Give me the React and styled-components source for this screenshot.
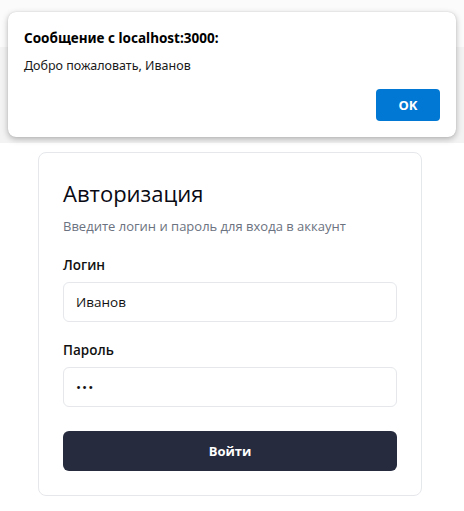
import React from 'react'
import styled, { createGlobalStyle } from 'styled-components'

const GlobalStyle = createGlobalStyle`
  * { box-sizing: border-box; }
  body {
    margin: 0;
    background: #fff;
    font-family: "Open Sans", "Noto Sans", sans-serif;
  }
`

const Backdrop = styled.div`
  height: 143px;
  padding: 12px 8px 0 8px;
  background: linear-gradient(#fbfbfb 0 47px, #f3f3f3 47px);
`

const Dialog = styled.div`
  height: 125px;
  background: #fff;
  border-radius: 8px;
  box-shadow: 0 2px 6px rgba(0, 0, 0, 0.28), 0 0 1px rgba(0, 0, 0, 0.2);
  padding: 17px 16px 0 16px;
  display: flex;
  flex-direction: column;
  font-family: "Noto Sans", "Open Sans", sans-serif;
`

const DialogTitle = styled.div`
  font-size: 13.5px;
  font-weight: 700;
  color: #000;
  line-height: 18px;
`

const DialogText = styled.div`
  margin-top: 10px;
  font-size: 12.5px;
  color: #1a1a1a;
  line-height: 18px;
`

const DialogActions = styled.div`
  display: flex;
  justify-content: flex-end;
  margin-top: 14px;
`

const OkButton = styled.button`
  width: 64px;
  height: 32px;
  border: none;
  border-radius: 4px;
  background: #0078d4;
  color: #fff;
  font-family: inherit;
  font-size: 13px;
  font-weight: 700;
`

const Card = styled.form`
  width: 384px;
  margin: 9px 0 0 38px;
  border: 1px solid #e5e7eb;
  border-radius: 8px;
  padding: 24px;
  display: flex;
  flex-direction: column;
`

const Heading = styled.h1`
  margin: 0;
  font-size: 22px;
  font-weight: 500;
  line-height: 32px;
  color: #0a0a14;
`

const Subtitle = styled.p`
  margin: 7px 0 0;
  font-size: 13px;
  line-height: 20px;
  color: #6b7280;
`

const Field = styled.div`
  display: flex;
  flex-direction: column;
  gap: 7px;
  margin-top: ${p => p.$top}px;
`

const Label = styled.label`
  font-size: 13.5px;
  font-weight: 600;
  line-height: 20px;
  color: #111;
`

const Input = styled.input`
  height: 40px;
  border: 1px solid #e5e7eb;
  border-radius: 6px;
  padding: 0 12px;
  font-family: inherit;
  font-size: 13.5px;
  color: #111;
  background: #fff;
  outline: none;
  letter-spacing: ${p => (p.type === 'password' ? '1px' : 'normal')};
`

const Submit = styled.button`
  margin-top: 24px;
  height: 40px;
  border: none;
  border-radius: 6px;
  background: #262b3d;
  color: #fff;
  font-family: inherit;
  font-size: 13px;
  font-weight: 700;
`

export default function App() {
  return (
    <>
      <GlobalStyle />
      <Backdrop>
        <Dialog>
          <DialogTitle>Сообщение с localhost:3000:</DialogTitle>
          <DialogText>Добро пожаловать, Иванов</DialogText>
          <DialogActions>
            <OkButton>OK</OkButton>
          </DialogActions>
        </Dialog>
      </Backdrop>
      <Card onSubmit={e => e.preventDefault()}>
        <Heading>Авторизация</Heading>
        <Subtitle>Введите логин и пароль для входа в аккаунт</Subtitle>
        <Field $top={19}>
          <Label>Логин</Label>
          <Input defaultValue="Иванов" />
        </Field>
        <Field $top={18}>
          <Label>Пароль</Label>
          <Input type="password" defaultValue="123" />
        </Field>
        <Submit type="submit">Войти</Submit>
      </Card>
    </>
  )
}
